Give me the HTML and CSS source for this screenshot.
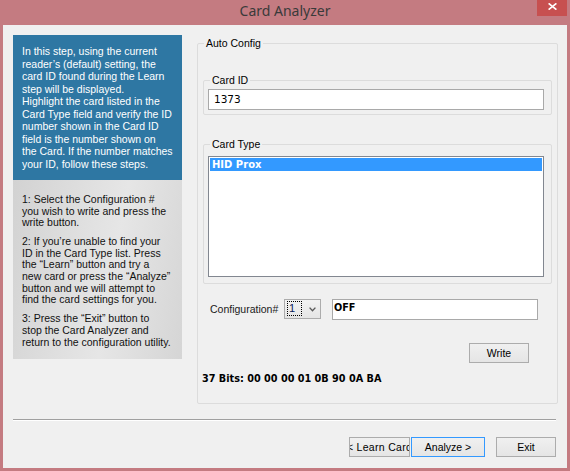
FILE: index.html
```html
<!DOCTYPE html>
<html>
<head>
<meta charset="utf-8">
<title>Card Analyzer</title>
<link rel="stylesheet" href="styles.css">
</head>
<body>
<div class="window">
  <div class="titlebar">
    <div class="title">Card Analyzer</div>
    <div class="close">
      <svg width="9" height="7" viewBox="0 0 9 7"><path d="M0.6 0.4 L8.4 6.6 M8.4 0.4 L0.6 6.6" stroke="#fff" stroke-width="1.7" fill="none"/></svg>
    </div>
  </div>
  <div class="client">
    <div class="main">
      <div class="side">
        <div class="side-top">
          In this step, using the current<br>
          reader’s (default) setting, the<br>
          card ID found during the Learn<br>
          step will be displayed.<br>
          Highlight the card listed in the<br>
          Card Type field and verify the ID<br>
          number shown in the Card ID<br>
          field is the number shown on<br>
          the Card. If the number matches<br>
          your ID, follow these steps.
        </div>
        <div class="side-bottom">
          <p>1: Select the Configuration #<br>you wish to write and press the<br>write button.</p>
          <p>2: If you’re unable to find your<br>ID in the Card Type list. Press<br>the “Learn” button and try a<br>new card or press the “Analyze”<br>button and we will attempt to<br>find the card settings for you.</p>
          <p>3: Press the “Exit” button to<br>stop the Card Analyzer and<br>return to the configuration utility.</p>
        </div>
      </div>
      <fieldset class="group auto">
        <legend>Auto Config</legend>
        <fieldset class="group card-id">
          <legend>Card ID</legend>
          <div class="textbox">1373</div>
        </fieldset>
        <fieldset class="group card-type">
          <legend>Card Type</legend>
          <div class="listbox">
            <div class="item selected">HID Prox</div>
          </div>
        </fieldset>
        <div class="config-row">
          <span class="config-label">Configuration#</span>
          <div class="dropdown">
            <span class="focus">1</span>
            <svg class="chev" width="7" height="5" viewBox="0 0 7 5"><polyline points="0.6,0.6 3.5,3.8 6.4,0.6" stroke="#5a5a5a" stroke-width="1.4" fill="none"/></svg>
          </div>
          <div class="off">OFF</div>
        </div>
        <div class="write-row">
          <button class="btn write">Write</button>
        </div>
        <div class="bits">37 Bits: 00 00 00 01 0B 90 0A BA</div>
      </fieldset>
    </div>
    <div class="sep"></div>
    <div class="buttons">
      <button class="btn learn"><span>&lt; Learn Card</span></button>
      <button class="btn analyze"><span>Analyze &gt;</span></button>
      <button class="btn exit"><span>Exit</span></button>
    </div>
  </div>
</div>
</body>
</html>
```

FILE: styles.css
```css
* { box-sizing: border-box; }

body {
  margin: 0;
  width: 570px;
  height: 471px;
  overflow: hidden;
  background: #c47b81;
  font-family: "Liberation Sans", Arial, sans-serif;
  color: #000;
}

.window {
  width: 570px;
  height: 471px;
  display: flex;
  flex-direction: column;
}

.titlebar {
  height: 25px;
  flex: none;
  display: grid;
  grid-template-columns: 1fr auto 1fr;
  align-items: start;
}

.title {
  grid-column: 2;
  font-family: "Noto Sans", sans-serif;
  font-size: 14px;
  line-height: 21px;
  color: #3a3a3a;
}

.close {
  grid-column: 3;
  justify-self: end;
  width: 30px;
  height: 16px;
  margin-right: 3px;
  background: #c75050;
  display: flex;
  justify-content: center;
  align-items: flex-start;
  padding-top: 3px;
}

.close svg { display: block; }

.client {
  flex: 1;
  margin: 0 3px 3px;
  background: #f0f0f0;
  display: flex;
  flex-direction: column;
  padding: 10px 11px 0 10px;
}

.main {
  display: flex;
  align-items: flex-start;
}

.side {
  width: 169px;
  height: 324px;
  flex: none;
  display: flex;
  flex-direction: column;
}

.side-top {
  height: 145px;
  flex: none;
  background: #2e77a3;
  color: #fff;
  padding: 10px 2px 0 9px;
  font-size: 10.5px;
  line-height: 12.5px;
  white-space: nowrap;
}

.side-bottom {
  flex: 1;
  background: linear-gradient(100deg, #d2d2d2 0%, #e0e0e0 40%, #e6e6e6 58%, #d5d5d5 100%);
  color: #111;
  padding: 14px 2px 0 9px;
  font-size: 10.5px;
  line-height: 11.6px;
  white-space: nowrap;
}

.side-bottom p { margin: 0 0 7.5px; }

fieldset {
  margin: 0;
  padding: 0;
  min-width: 0;
  border: 1px solid #dcdcdc;
  border-radius: 2px;
}

legend {
  padding: 0 2px;
  margin-left: 6px;
  font-size: 10.5px;
  line-height: 13px;
}

.auto {
  width: 361px;
  flex: none;
  margin: 2px 0 0 15px;
  padding: 0 0 18px;
}

.card-id { margin: 24px 5px 0; }

.textbox {
  margin: 2px 7px 4px 4px;
  height: 21px;
  border: 1px solid #a9a9a9;
  background: #fff;
  padding: 0 5px;
  font-family: "DejaVu Sans", Verdana, sans-serif;
  font-size: 10.5px;
  line-height: 19px;
}

.card-type { margin: 23px 5px 0; }

.listbox {
  margin: 5px 7px 6px 4px;
  height: 121px;
  border: 1px solid #828790;
  background: #fff;
  padding: 1px;
}

.item {
  height: 13px;
  padding-left: 2px;
  font-family: "DejaVu Sans", Verdana, sans-serif;
  font-weight: bold;
  font-size: 10px;
  line-height: 13px;
}

.item.selected {
  background: #3399ff;
  color: #fff;
}

.config-row {
  display: flex;
  align-items: flex-start;
  margin: 15px 0 0 12px;
  height: 21px;
}

.config-label {
  width: 74px;
  font-size: 10.5px;
  line-height: 20px;
  color: #1a1a1a;
}

.dropdown {
  width: 37px;
  height: 20px;
  border: 1px solid #acacac;
  background: linear-gradient(#f2f2f2, #e5e5e5);
  display: flex;
  align-items: flex-start;
  padding: 1px 0 0 2px;
}

.focus {
  width: 15px;
  height: 15px;
  border: 1px dotted #000;
  font-size: 11px;
  line-height: 13px;
  padding-left: 1px;
  color: #0a1a5a;
}

.chev {
  display: block;
  margin: 6px 0 0 7px;
}

.off {
  width: 206px;
  height: 21px;
  margin-left: 11px;
  border: 1px solid #a9a9a9;
  background: #fff;
  padding-left: 1px;
  font-family: "DejaVu Sans", Verdana, sans-serif;
  font-weight: bold;
  font-size: 9.7px;
  line-height: 16px;
}

.write-row {
  display: flex;
  justify-content: flex-end;
  margin: 23px 28px 0 0;
}

.bits {
  margin: 9px 0 0 4px;
  font-family: "DejaVu Sans", Verdana, sans-serif;
  font-weight: bold;
  font-size: 9.7px;
  line-height: 13px;
  white-space: nowrap;
}

.btn {
  height: 20px;
  margin: 0;
  padding: 0;
  border: 1px solid #acacac;
  background: linear-gradient(#f0f0f0, #e5e5e5);
  font-family: "Liberation Sans", Arial, sans-serif;
  font-size: 10.5px;
  color: #000;
  display: flex;
  justify-content: center;
  align-items: center;
  overflow: hidden;
  white-space: nowrap;
}

.btn span { flex: none; }

.write { width: 60px; }

.sep {
  margin-top: 15px;
  height: 2px;
  border-top: 1px solid #a0a0a0;
  border-bottom: 1px solid #ffffff;
}

.buttons {
  display: flex;
  justify-content: flex-end;
  margin-top: 16px;
}

.learn { width: 61px; margin-right: 1px; letter-spacing: 0.3px; }
.analyze { width: 74px; margin-right: 11px; border-color: #3399ff; }
.exit { width: 60px; }
```
